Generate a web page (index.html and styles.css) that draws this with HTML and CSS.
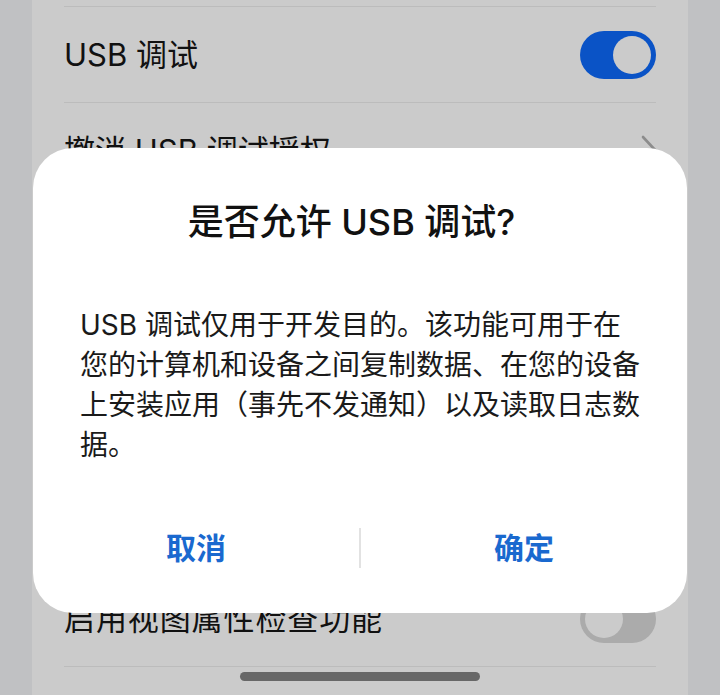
FILE: index.html
```html
<!DOCTYPE html>
<html lang="zh-CN">
<head>
<meta charset="utf-8">
<title>USB 调试</title>
<link rel="stylesheet" href="styles.css">
</head>
<body>
<div class="screen">
  <div class="card">
    <div class="row">
      <span class="label">USB 调试</span>
      <span class="toggle on"><span class="knob"></span></span>
    </div>
    <div class="row">
      <span class="label">撤消 USB 调试授权</span>
      <svg class="chevron" width="18" height="32" viewBox="0 0 18 32"><path d="M3 2 L16 16 L3 30" fill="none" stroke="#8c8c8c" stroke-width="2.6" stroke-linecap="round" stroke-linejoin="round"/></svg>
    </div>
    <div class="row">
      <span class="label">选择模拟位置信息应用</span>
    </div>
    <div class="row">
      <span class="label">仅充电模式下允许 ADB 调试</span>
    </div>
    <div class="row">
      <span class="label">监控 ADB 安装应用</span>
    </div>
    <div class="row short">
      <span class="label">选择调试应用</span>
    </div>
    <div class="row">
      <span class="label wide">启用视图属性检查功能</span>
      <span class="toggle"><span class="knob"></span></span>
    </div>
    <div class="row"></div>
  </div>

  <div class="dialog">
    <h1 class="title">是否允许 USB 调试?</h1>
    <p class="message">USB 调试仅用于开发目的。该功能可用于在您的计算机和设备之间复制数据、在您的设备上安装应用（事先不发通知）以及读取日志数据。</p>
    <div class="actions">
      <button class="action">取消</button>
      <span class="sep"></span>
      <button class="action">确定</button>
    </div>
  </div>

  <div class="home-bar"></div>
</div>
</body>
</html>
```

FILE: styles.css
```css
* {
  box-sizing: border-box;
}

html, body {
  margin: 0;
  padding: 0;
}

body {
  width: 720px;
  height: 695px;
  overflow: hidden;
  background: #c0c1c3;
  font-family: "Inter", "Noto Sans CJK SC", sans-serif;
  color: #111;
}

.screen {
  position: relative;
  width: 720px;
  height: 695px;
  overflow: hidden;
}

.card {
  margin: 0 32px;
  height: 695px;
  overflow: hidden;
  background: #cbcbcb;
  padding: 6px 32px 0;
}

.row {
  height: 96px;
  flex-shrink: 0;
  border-top: 1px solid #bcbcbc;
  display: flex;
  align-items: center;
  justify-content: space-between;
}

.row.short {
  height: 84px;
}

.label {
  font-size: 31px;
  line-height: 40px;
  color: #111;
}

.label.wide {
  letter-spacing: 0.9px;
}

.toggle {
  width: 76px;
  height: 48px;
  border-radius: 24px;
  background: #ababab;
  padding: 5px;
  display: flex;
  justify-content: flex-start;
  align-items: center;
}

.toggle.on {
  background: #0a53c6;
  justify-content: flex-end;
}

.knob {
  width: 38px;
  height: 38px;
  border-radius: 50%;
  background: #cbcbcb;
}

.chevron {
  margin-right: -2px;
}

.dialog {
  position: absolute;
  left: 33px;
  top: 148px;
  width: 654px;
  height: 465px;
  background: #ffffff;
  border-radius: 40px;
  padding: 50px 0 0;
}

.title {
  margin: 0;
  padding-right: 17px;
  text-align: center;
  font-size: 36px;
  line-height: 48px;
  font-weight: 500;
  color: #111;
}

.message {
  margin: 59px 0 0 47px;
  width: 562px;
  font-size: 28px;
  line-height: 40px;
  color: #1a1a1a;
}

.actions {
  margin-top: 63px;
  height: 40px;
  display: flex;
  align-items: stretch;
}

.action {
  flex: 1;
  border: 0;
  background: none;
  padding: 0;
  font-family: "Inter", "Noto Sans CJK SC", sans-serif;
  font-size: 30px;
  line-height: 40px;
  font-weight: 700;
  color: #1a69cf;
}

.sep {
  width: 2px;
  background: #e2e2e2;
}

.home-bar {
  position: absolute;
  left: 240px;
  top: 672px;
  width: 240px;
  height: 9px;
  border-radius: 5px;
  background: #676767;
}
```
